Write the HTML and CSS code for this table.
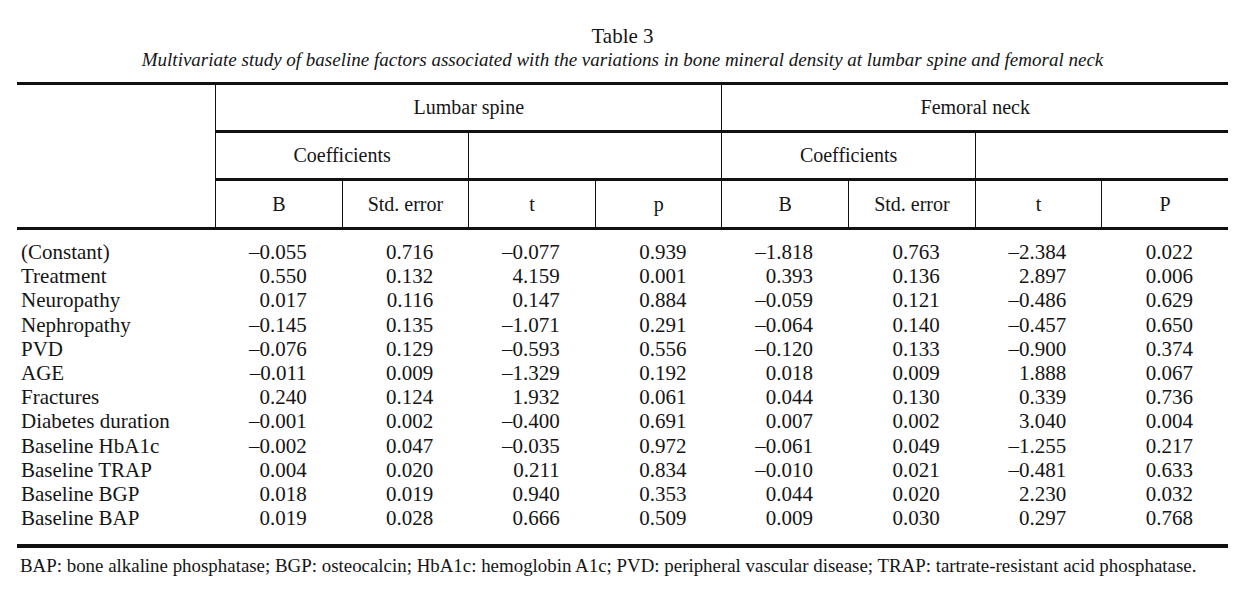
FILE: index.html
```html
<!DOCTYPE html>
<html lang="en">
<head>
<meta charset="utf-8">
<title>Table 3</title>
<link rel="stylesheet" href="styles.css">
</head>
<body>
<div class="page">
  <div class="title">Table 3</div>
  <div class="caption">Multivariate study of baseline factors associated with the variations in bone mineral density at lumbar spine and femoral neck</div>
  <table class="tbl">
    <colgroup>
      <col class="c-label">
      <col class="c-num"><col class="c-num"><col class="c-num"><col class="c-num">
      <col class="c-num"><col class="c-num"><col class="c-num"><col class="c-num">
    </colgroup>
    <thead>
      <tr class="h1">
        <th class="blank" rowspan="3"></th>
        <th class="vl" colspan="4">Lumbar spine</th>
        <th class="vl" colspan="4">Femoral neck</th>
      </tr>
      <tr class="h2">
        <th class="vl rt" colspan="2">Coefficients</th>
        <th class="vl rt" colspan="2"></th>
        <th class="vl rt" colspan="2">Coefficients</th>
        <th class="vl rt" colspan="2"></th>
      </tr>
      <tr class="h3">
        <th class="vl rt rb">B</th>
        <th class="vl rt rb">Std. error</th>
        <th class="vl rt rb">t</th>
        <th class="vl rt rb">p</th>
        <th class="vl rt rb">B</th>
        <th class="vl rt rb">Std. error</th>
        <th class="vl rt rb">t</th>
        <th class="vl rt rb">P</th>
      </tr>
    </thead>
    <tbody>
      <tr class="first"><td>(Constant)</td><td>&ndash;0.055</td><td>0.716</td><td>&ndash;0.077</td><td>0.939</td><td>&ndash;1.818</td><td>0.763</td><td>&ndash;2.384</td><td>0.022</td></tr>
      <tr><td>Treatment</td><td>0.550</td><td>0.132</td><td>4.159</td><td>0.001</td><td>0.393</td><td>0.136</td><td>2.897</td><td>0.006</td></tr>
      <tr><td>Neuropathy</td><td>0.017</td><td>0.116</td><td>0.147</td><td>0.884</td><td>&ndash;0.059</td><td>0.121</td><td>&ndash;0.486</td><td>0.629</td></tr>
      <tr><td>Nephropathy</td><td>&ndash;0.145</td><td>0.135</td><td>&ndash;1.071</td><td>0.291</td><td>&ndash;0.064</td><td>0.140</td><td>&ndash;0.457</td><td>0.650</td></tr>
      <tr><td>PVD</td><td>&ndash;0.076</td><td>0.129</td><td>&ndash;0.593</td><td>0.556</td><td>&ndash;0.120</td><td>0.133</td><td>&ndash;0.900</td><td>0.374</td></tr>
      <tr><td>AGE</td><td>&ndash;0.011</td><td>0.009</td><td>&ndash;1.329</td><td>0.192</td><td>0.018</td><td>0.009</td><td>1.888</td><td>0.067</td></tr>
      <tr><td>Fractures</td><td>0.240</td><td>0.124</td><td>1.932</td><td>0.061</td><td>0.044</td><td>0.130</td><td>0.339</td><td>0.736</td></tr>
      <tr><td>Diabetes duration</td><td>&ndash;0.001</td><td>0.002</td><td>&ndash;0.400</td><td>0.691</td><td>0.007</td><td>0.002</td><td>3.040</td><td>0.004</td></tr>
      <tr><td>Baseline HbA1c</td><td>&ndash;0.002</td><td>0.047</td><td>&ndash;0.035</td><td>0.972</td><td>&ndash;0.061</td><td>0.049</td><td>&ndash;1.255</td><td>0.217</td></tr>
      <tr><td>Baseline TRAP</td><td>0.004</td><td>0.020</td><td>0.211</td><td>0.834</td><td>&ndash;0.010</td><td>0.021</td><td>&ndash;0.481</td><td>0.633</td></tr>
      <tr><td>Baseline BGP</td><td>0.018</td><td>0.019</td><td>0.940</td><td>0.353</td><td>0.044</td><td>0.020</td><td>2.230</td><td>0.032</td></tr>
      <tr class="last"><td>Baseline BAP</td><td>0.019</td><td>0.028</td><td>0.666</td><td>0.509</td><td>0.009</td><td>0.030</td><td>0.297</td><td>0.768</td></tr>
    </tbody>
  </table>
  <div class="note">BAP: bone alkaline phosphatase; BGP: osteocalcin; HbA1c: hemoglobin A1c; PVD: peripheral vascular disease; TRAP: tartrate-resistant acid phosphatase.</div>
</div>
</body>
</html>
```

FILE: styles.css
```css
html, body {
  margin: 0;
  padding: 0;
  background: #ffffff;
}

body {
  font-family: "Liberation Serif", "Times New Roman", serif;
  color: #151515;
}

.page {
  padding: 24px 11px 0 17px;
}

.title {
  text-align: center;
  font-size: 21px;
  line-height: 24px;
  height: 24px;
}

.caption {
  text-align: center;
  font-style: italic;
  font-size: 19px;
  line-height: 24px;
  height: 24px;
  margin-bottom: 10px;
}

.tbl {
  width: 1211px;
  table-layout: fixed;
  border-collapse: separate;
  border-spacing: 0;
  border-top: 3px solid #111;
  border-bottom: 4px solid #111;
}

.c-label { width: 198px; }
.c-num { width: 126.6px; }

.tbl th {
  font-weight: normal;
  font-size: 20px;
  text-align: center;
  padding: 0;
  vertical-align: middle;
}

.tbl .vl { border-left: 1px solid #111; }
.tbl .rt { border-top: 3px solid #111; }
.tbl .rb { border-bottom: 3px solid #111; }
.tbl .blank { border-bottom: 3px solid #111; }

.h1 th { height: 45px; }
.h2 th { height: 45px; }
.h3 th { height: 46px; }

.tbl td {
  font-size: 21px;
  line-height: 24.2px;
  padding: 0 35px 0 0;
  text-align: right;
  white-space: nowrap;
}

.tbl td:first-child {
  text-align: left;
  padding: 0 0 0 4px;
}

.tbl tr.first td { padding-top: 10px; }
.tbl tr.last td { padding-bottom: 14px; }

.note {
  font-size: 18.9px;
  line-height: 20px;
  margin-top: 8px;
  padding-left: 3px;
  white-space: nowrap;
}
```
